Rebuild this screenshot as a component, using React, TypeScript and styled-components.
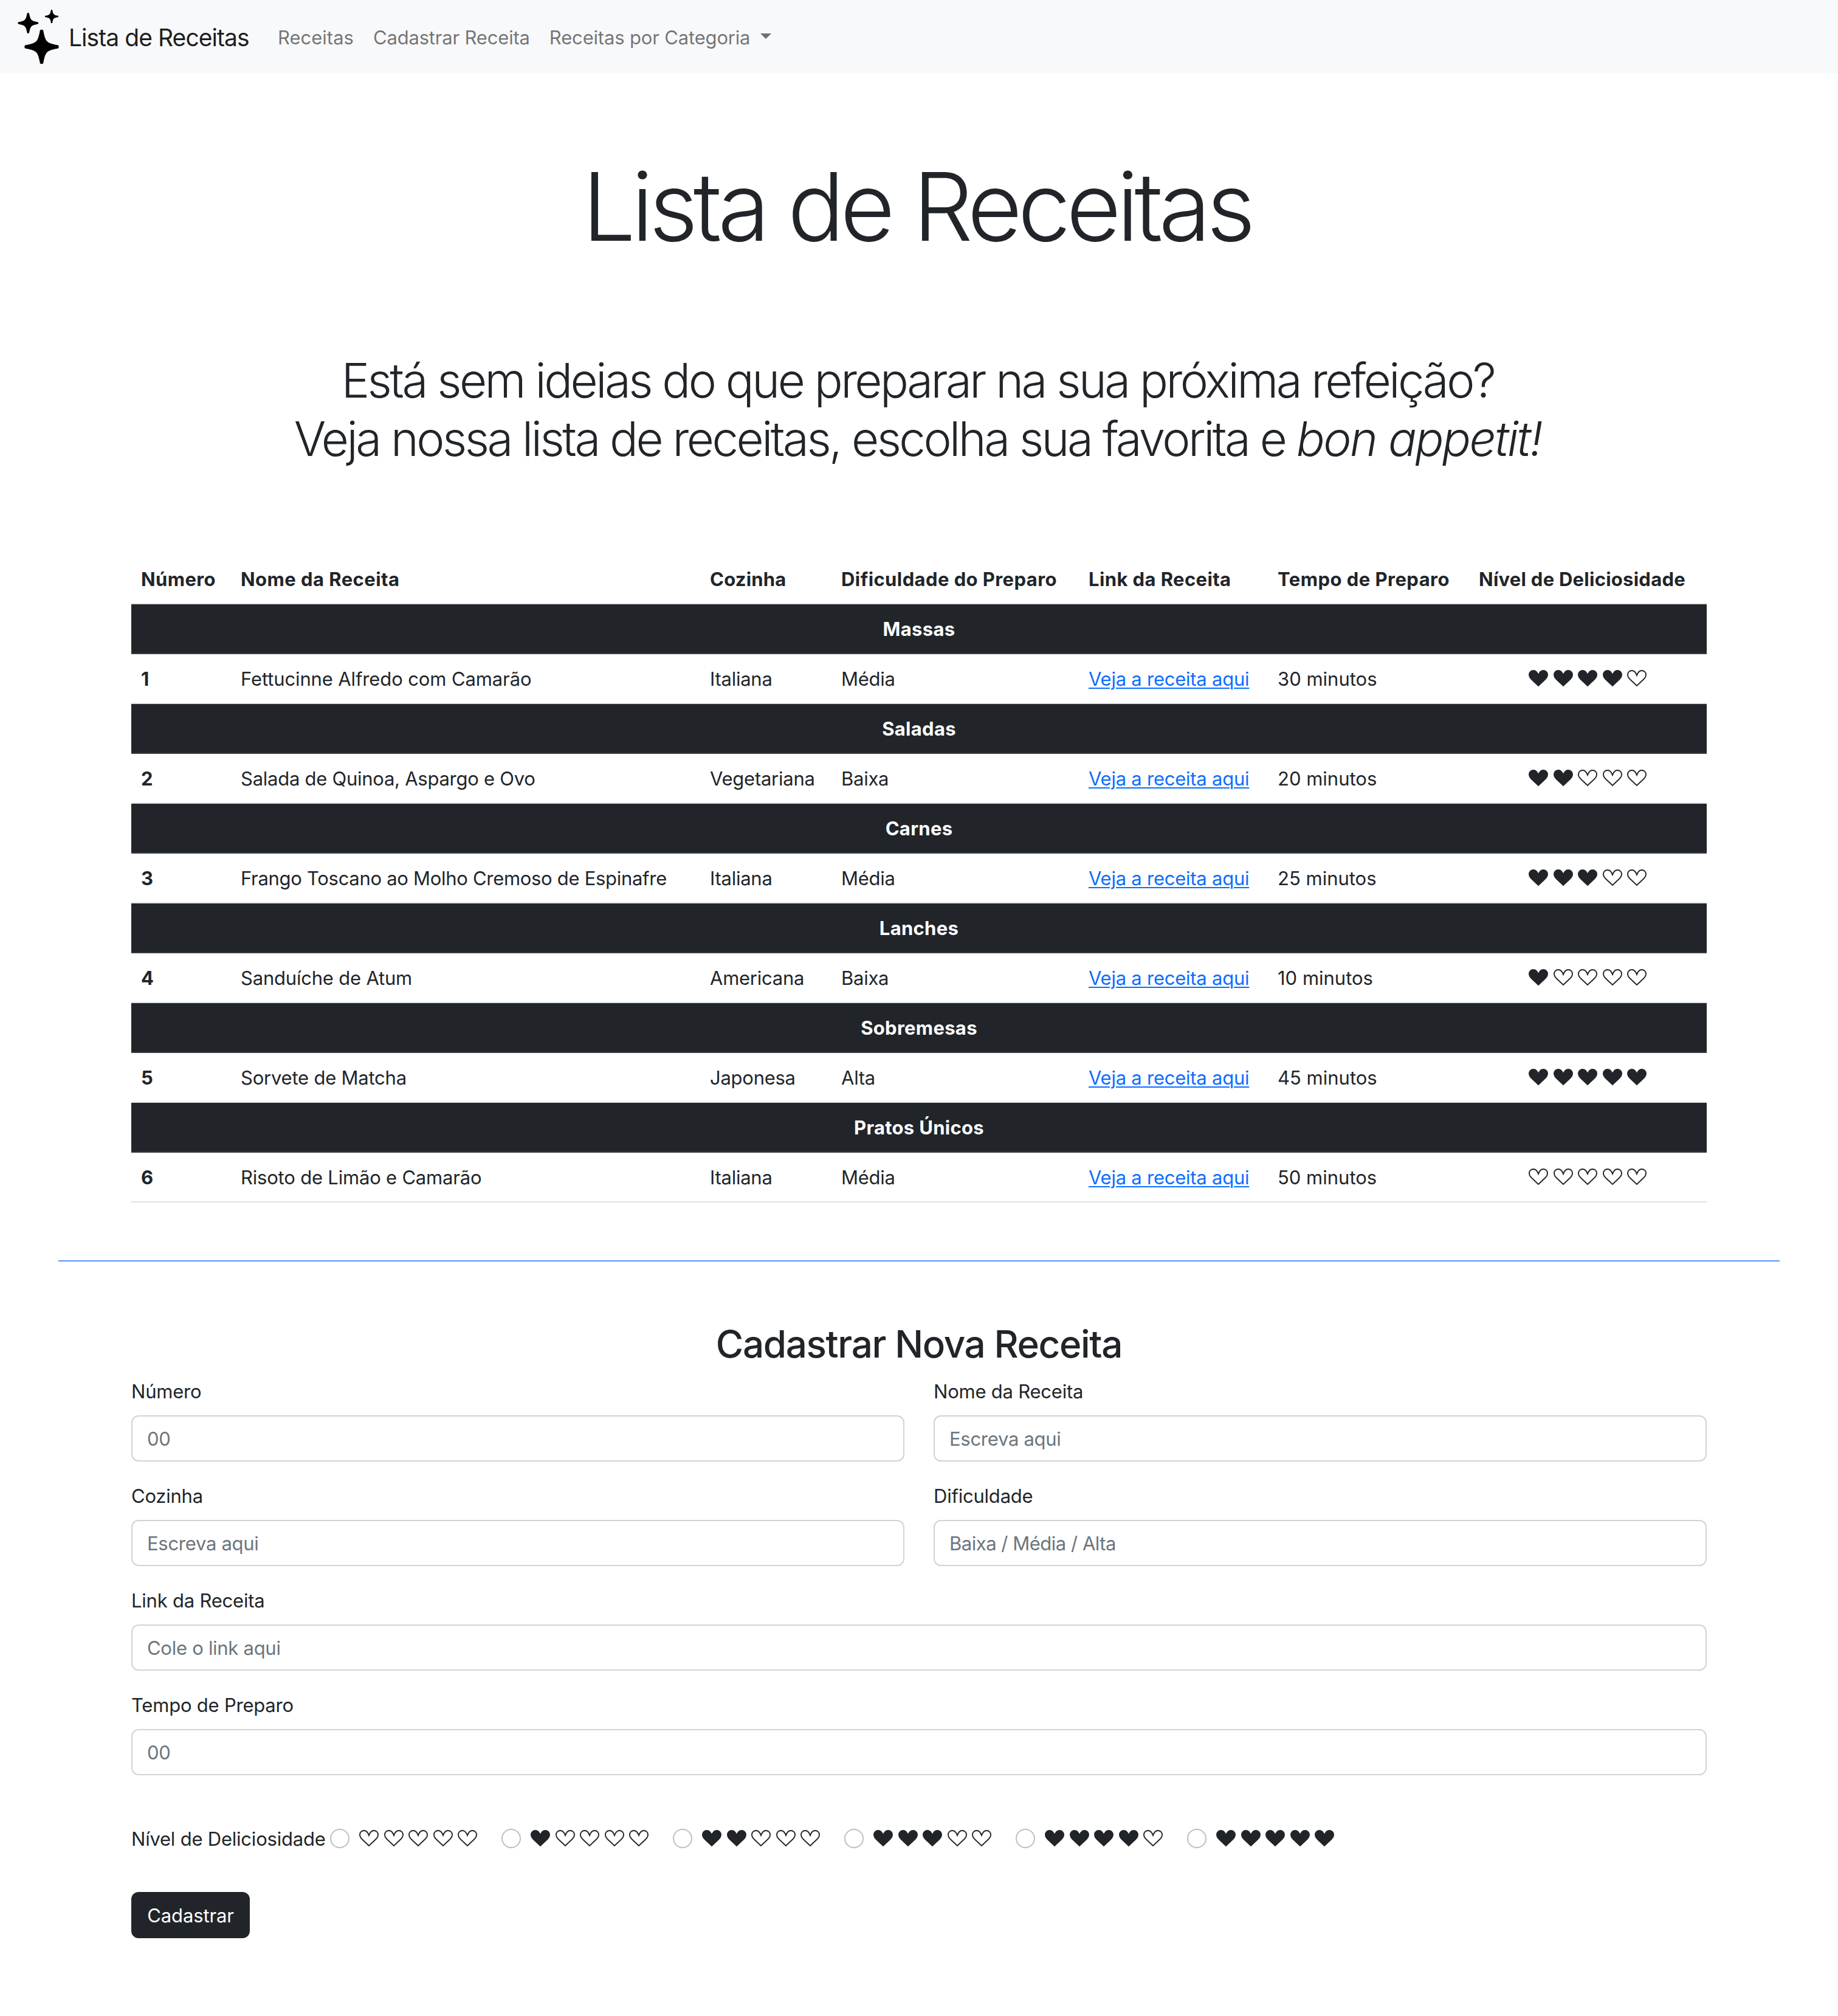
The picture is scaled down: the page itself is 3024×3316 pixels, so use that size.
import React from "react";
import styled, { createGlobalStyle } from "styled-components";

const ink = "#212529";

const GlobalStyle = createGlobalStyle`
  *, *::before, *::after { box-sizing: border-box; }
  body {
    margin: 0;
    background: #fff;
    color: ${ink};
    font-family: Inter, "Liberation Sans", sans-serif;
    font-size: 31px;
    line-height: 49px;
    letter-spacing: -0.22px;
    -webkit-font-smoothing: antialiased;
  }
`;

const Page = styled.div`
  min-height: 3316px;
`;

const Navbar = styled.nav`
  display: flex;
  align-items: center;
  height: 121px;
  padding: 2px 24px 0;
  background: #f8f9fa;
`;

const Brand = styled.a`
  display: flex;
  align-items: center;
  gap: 9px;
  width: 417px;
  color: rgba(0, 0, 0, 0.9);
  font-size: 39px;
  line-height: 47px;
  letter-spacing: -0.94px;
  white-space: nowrap;
`;

const Logo = styled.svg`
  flex: none;
  width: 80px;
  height: 91px;
`;

const NavList = styled.ul`
  display: flex;
  margin: 0;
  padding: 0;
  list-style: none;
`;

const NavLink = styled.a<{ $tracking?: number }>`
  display: flex;
  padding: 0 16px;
  color: rgba(0, 0, 0, 0.55);
  line-height: 37px;
  letter-spacing: ${(p) => p.$tracking ?? -0.2}px;
  white-space: nowrap;
`;

const Caret = styled.span`
  width: 0;
  height: 0;
  margin: 12px 0 0 17px;
  border-top: 9.6px solid currentColor;
  border-right: 9.6px solid transparent;
  border-left: 9.6px solid transparent;
`;

const Title = styled.h1`
  margin: 123px 0 143px;
  padding-right: 8px;
  font-size: 156px;
  font-weight: 300;
  line-height: 191px;
  letter-spacing: -7.37px;
  text-align: center;
`;

const Lead = styled.div`
  display: flex;
  flex-direction: column;
  gap: 1px;
  margin-bottom: 143px;
  font-size: 78px;
  font-weight: 300;
  line-height: 95px;
  letter-spacing: -3.54px;
  text-align: center;
  white-space: nowrap;
`;

const LeadLine = styled.p`
  margin: 0;
  padding-right: 4px;
`;

const Foreign = styled.em`
  letter-spacing: -2.5px;
`;

const Container = styled.section`
  width: 2592px;
  margin: 0 auto;
`;

const Table = styled.table`
  width: 100%;
  table-layout: fixed;
  border-collapse: separate;
  border-spacing: 0;
`;

const HeadCell = styled.th<{ $tracking?: number }>`
  height: 82px;
  padding: 16px 0 15px 16px;
  border-bottom: 2px solid #dee2e6;
  font-weight: 700;
  letter-spacing: ${(p) => p.$tracking ?? 0.48}px;
  text-align: left;
  white-space: nowrap;
`;

const GroupCell = styled.th`
  height: 82px;
  padding: 16px 16px 15px;
  border-bottom: 2px solid #373b3e;
  background: ${ink};
  color: #fff;
  font-weight: 700;
  letter-spacing: 0.3px;
  text-align: center;
`;

const Cell = styled.td<{ $bold?: boolean; $tracking?: number }>`
  height: 82px;
  padding: 16px 0 15px 16px;
  border-bottom: 2px solid #dee2e6;
  font-weight: ${(p) => (p.$bold ? 700 : 400)};
  letter-spacing: ${(p) => p.$tracking ?? -0.2}px;
  vertical-align: top;
  white-space: nowrap;
`;

const RecipeLink = styled.a`
  color: #0d6efd;
  letter-spacing: -0.24px;
  text-decoration: underline;
  text-decoration-thickness: 2px;
  text-underline-offset: 3px;
`;

const RatingCell = styled(Cell)`
  padding: 26px 15px 0 14px;
`;

const Hearts = styled.span`
  display: flex;
  justify-content: center;
  gap: 8.5px;
`;

const HeartIcon = styled.svg`
  flex: none;
  width: 32px;
  height: 28px;
`;

const Divider = styled.hr`
  height: 2px;
  margin: 95px 96px 97px;
  border: 0;
  background: #5693fe;
`;

const FormTitle = styled.h2`
  margin: 0 0 15px;
  font-size: 62px;
  font-weight: 500;
  line-height: 77px;
  letter-spacing: -1.37px;
  text-align: center;
`;

const Fields = styled.div`
  display: grid;
  grid-template-columns: 1fr 1fr;
  gap: 32px 48px;
`;

const Field = styled.label<{ $wide?: boolean }>`
  display: flex;
  flex-direction: column;
  gap: 15px;
  grid-column: ${(p) => (p.$wide ? "1 / -1" : "auto")};
`;

const Input = styled.input<{ $tracking?: number }>`
  width: 100%;
  height: 76px;
  padding: 12px 24px 11px;
  border: 2px solid #ced4da;
  border-radius: 12px;
  background: #fff;
  color: ${ink};
  font: inherit;
  letter-spacing: ${(p) => p.$tracking ?? -0.28}px;
  outline: none;

  &::placeholder {
    color: #6c757d;
    opacity: 1;
  }
`;

const RatingRow = styled.div`
  display: flex;
  align-items: flex-start;
  height: 49px;
  margin: 80px 0 63px;
`;

const RatingLabel = styled.span`
  width: 327px;
  white-space: nowrap;
`;

const RatingOption = styled.label`
  display: flex;
  align-items: flex-start;
  gap: 16px;
  margin-right: 40px;
  padding-top: 8px;

  ${Hearts} {
    margin-top: 2px;
  }
`;

const Radio = styled.input`
  appearance: none;
  width: 32px;
  height: 32px;
  margin: 0;
  border: 2px solid rgba(0, 0, 0, 0.25);
  border-radius: 50%;
  background: #fff;
`;

const SubmitButton = styled.button`
  display: block;
  width: 195px;
  height: 76px;
  padding: 14px 0 13px;
  border: 0;
  border-radius: 12px;
  background: ${ink};
  color: #fff;
  font: inherit;
  letter-spacing: -0.13px;
  text-align: center;
`;

const STAR =
  "M3 -25.2 C4.6 -17 6 -12 9 -9 C12 -6 17 -4.6 25.2 -3 A3 3 0 0 1 25.2 3 C17 4.6 12 6 9 9 C6 12 4.6 17 3 25.2 A3 3 0 0 1 -3 25.2 C-4.6 17 -6 12 -9 9 C-12 6 -17 4.6 -25.2 3 A3 3 0 0 1 -25.2 -3 C-17 -4.6 -12 -6 -9 -9 C-6 -12 -4.6 -17 -3 -25.2 A3 3 0 0 1 3 -25.2 Z";

const HEART =
  "M16 8.8 C14.2 4 11.2 1 7.9 1 C4 1 1 3.9 1 7.7 C1 11.2 2.8 13.6 5.2 15.8 L16 26 L26.8 15.8 C29.2 13.6 31 11.2 31 7.7 C31 3.9 28 1 24.1 1 C20.8 1 17.8 4 16 8.8 Z";

const Sparkles = () => (
  <Logo viewBox="24 16 80 91" aria-hidden="true">
    <path d={STAR} transform="translate(46.3 38) scale(0.605)" />
    <path d={STAR} transform="translate(85 27) scale(0.395)" />
    <path d={STAR} transform="translate(68.5 77)" />
  </Logo>
);

const Rating = ({ value }: { value: number }) => (
  <Hearts role="img" aria-label={`${value} / 5`}>
    {[1, 2, 3, 4, 5].map((n) => (
      <HeartIcon key={n} viewBox="0 0 32 28">
        <path d={HEART} fill={n <= value ? ink : "none"} stroke={ink} strokeWidth="1.9" />
      </HeartIcon>
    ))}
  </Hearts>
);

const columns = [164, 772, 216, 407, 311, 331, 391];

const headings: [string, number?][] = [
  ["Número", 0.4],
  ["Nome da Receita", 0.45],
  ["Cozinha", 0.2],
  ["Dificuldade do Preparo", 0.42],
  ["Link da Receita", 0.4],
  ["Tempo de Preparo", 0.47],
  ["Nível de Deliciosidade", 0.26],
];

interface Recipe {
  group: string;
  name: string;
  tracking: number;
  cuisine: string;
  level: string;
  time: string;
  rating: number;
}

const recipes: Recipe[] = [
  { group: "Massas", name: "Fettucinne Alfredo com Camarão", tracking: -0.12, cuisine: "Italiana", level: "Média", time: "30 minutos", rating: 4 },
  { group: "Saladas", name: "Salada de Quinoa, Aspargo e Ovo", tracking: -0.26, cuisine: "Vegetariana", level: "Baixa", time: "20 minutos", rating: 2 },
  { group: "Carnes", name: "Frango Toscano ao Molho Cremoso de Espinafre", tracking: -0.3, cuisine: "Italiana", level: "Média", time: "25 minutos", rating: 3 },
  { group: "Lanches", name: "Sanduíche de Atum", tracking: -0.2, cuisine: "Americana", level: "Baixa", time: "10 minutos", rating: 1 },
  { group: "Sobremesas", name: "Sorvete de Matcha", tracking: -0.22, cuisine: "Japonesa", level: "Alta", time: "45 minutos", rating: 5 },
  { group: "Pratos Únicos", name: "Risoto de Limão e Camarão", tracking: -0.2, cuisine: "Italiana", level: "Média", time: "50 minutos", rating: 0 },
];

export default function App() {
  return (
    <Page>
      <GlobalStyle />
      <Navbar>
        <Brand>
          <Sparkles />
          Lista de Receitas
        </Brand>
        <NavList>
          <li><NavLink $tracking={0}>Receitas</NavLink></li>
          <li><NavLink $tracking={-0.18}>Cadastrar Receita</NavLink></li>
          <li>
            <NavLink $tracking={-0.17}>
              Receitas por Categoria
              <Caret />
            </NavLink>
          </li>
        </NavList>
      </Navbar>

      <Title>Lista de Receitas</Title>
      <Lead>
        <LeadLine>Está sem ideias do que preparar na sua próxima refeição?</LeadLine>
        <LeadLine>
          Veja nossa lista de receitas, escolha sua favorita e <Foreign>bon appetit!</Foreign>
        </LeadLine>
      </Lead>

      <Container>
        <Table>
          <colgroup>
            {columns.map((w, i) => <col key={i} width={w} />)}
          </colgroup>
          <thead>
            <tr>
              {headings.map(([text, tracking]) => (
                <HeadCell key={text} $tracking={tracking}>{text}</HeadCell>
              ))}
            </tr>
          </thead>
          <tbody>
            {recipes.map((r, i) => (
              <React.Fragment key={r.group}>
                <tr>
                  <GroupCell colSpan={7}>{r.group}</GroupCell>
                </tr>
                <tr>
                  <Cell $bold>{i + 1}</Cell>
                  <Cell $tracking={r.tracking}>{r.name}</Cell>
                  <Cell $tracking={-0.26}>{r.cuisine}</Cell>
                  <Cell $tracking={-0.26}>{r.level}</Cell>
                  <Cell><RecipeLink>Veja a receita aqui</RecipeLink></Cell>
                  <Cell $tracking={0}>{r.time}</Cell>
                  <RatingCell><Rating value={r.rating} /></RatingCell>
                </tr>
              </React.Fragment>
            ))}
          </tbody>
        </Table>
      </Container>

      <Divider />

      <Container>
        <FormTitle>Cadastrar Nova Receita</FormTitle>
        <Fields>
          <Field>Número<Input placeholder="00" /></Field>
          <Field>Nome da Receita<Input placeholder="Escreva aqui" /></Field>
          <Field>Cozinha<Input placeholder="Escreva aqui" /></Field>
          <Field>Dificuldade<Input placeholder="Baixa / Média / Alta" $tracking={-0.49} /></Field>
          <Field $wide>Link da Receita<Input placeholder="Cole o link aqui" /></Field>
          <Field $wide>Tempo de Preparo<Input placeholder="00" /></Field>
        </Fields>
        <RatingRow>
          <RatingLabel>Nível de Deliciosidade</RatingLabel>
          {[0, 1, 2, 3, 4, 5].map((value) => (
            <RatingOption key={value}>
              <Radio type="radio" name="rating" />
              <Rating value={value} />
            </RatingOption>
          ))}
        </RatingRow>
        <SubmitButton>Cadastrar</SubmitButton>
      </Container>
    </Page>
  );
}
